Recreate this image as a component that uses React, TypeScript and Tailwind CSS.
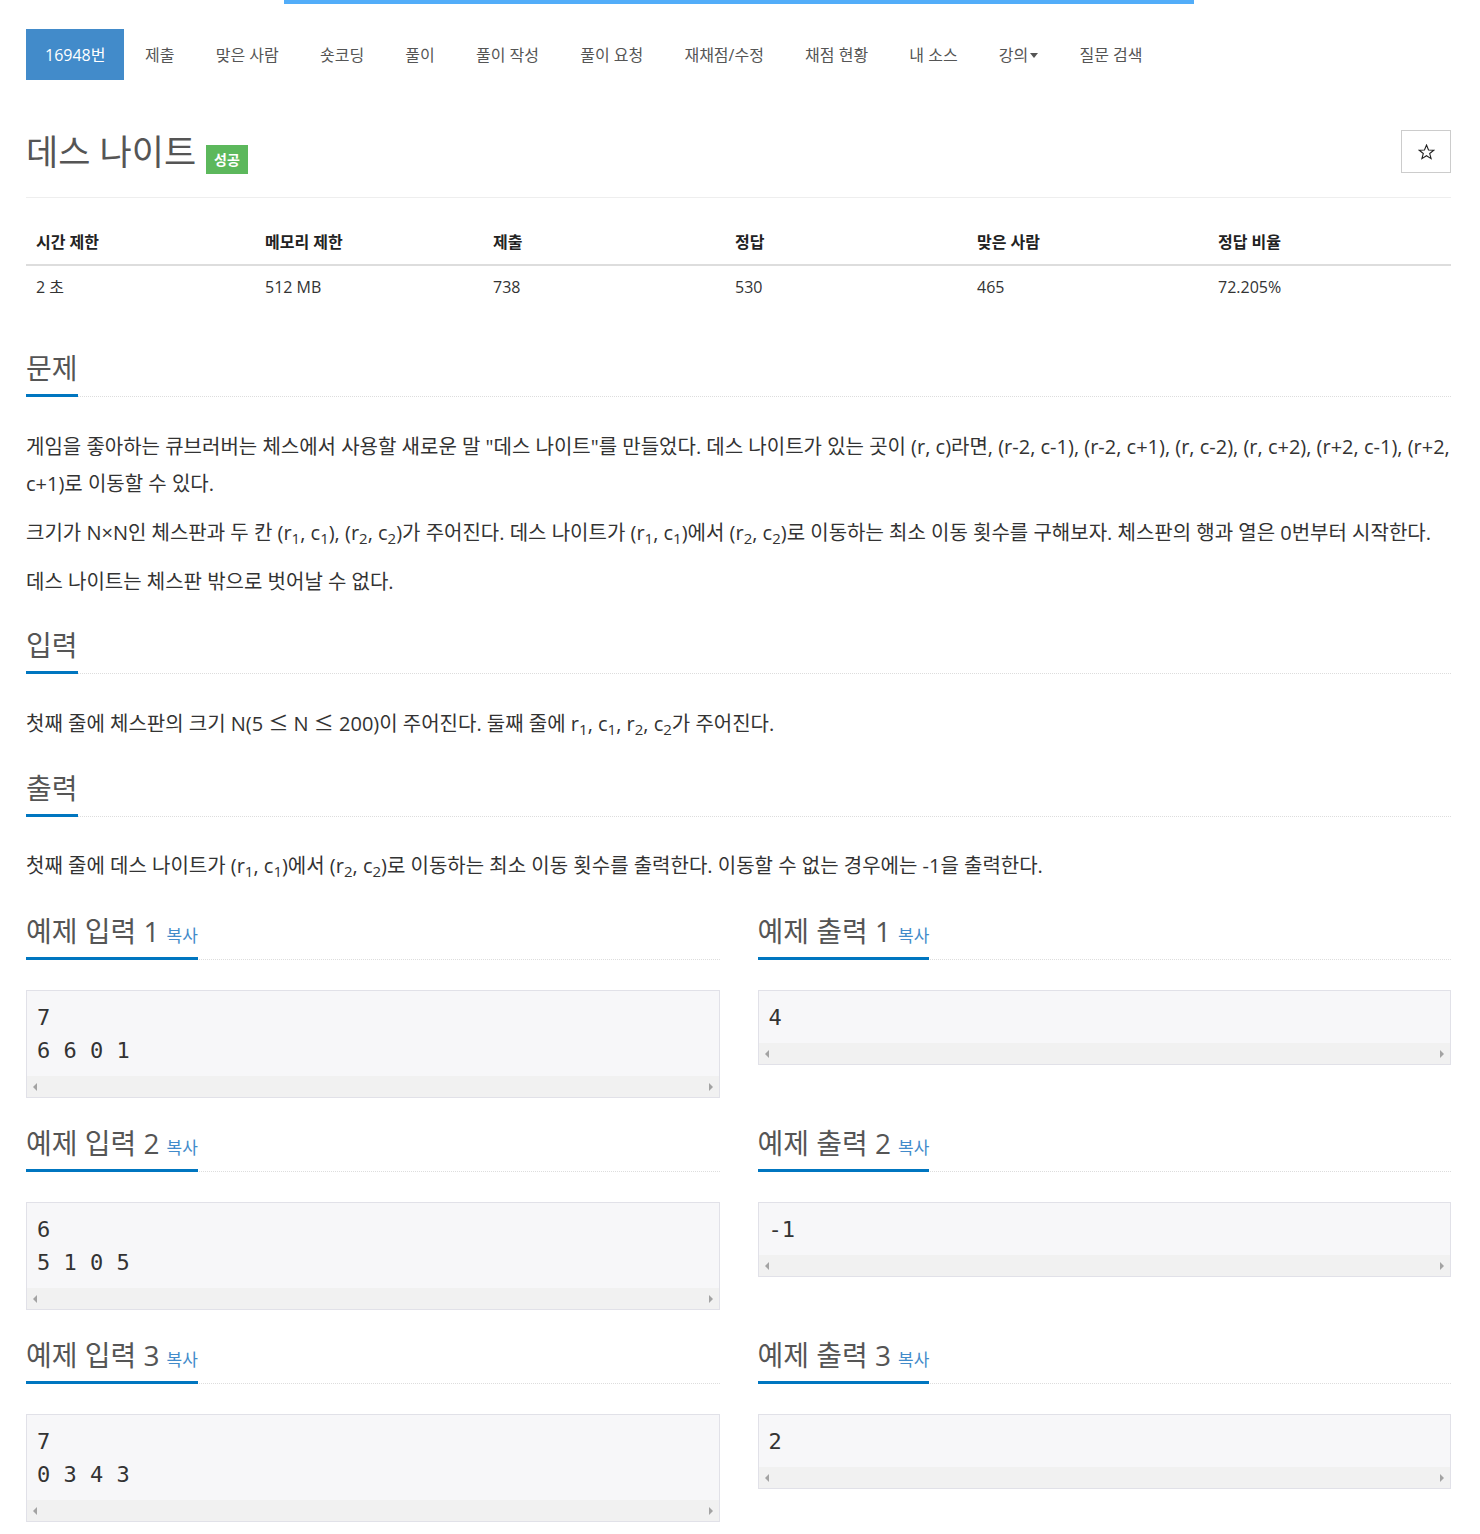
import React from 'react';

const navItems = ['제출', '맞은 사람', '숏코딩', '풀이', '풀이 작성', '풀이 요청', '재채점/수정', '채점 현황', '내 소스'];

const stats = [
  { label: '시간 제한', value: '2 초' },
  { label: '메모리 제한', value: '512 MB' },
  { label: '제출', value: '738' },
  { label: '정답', value: '530' },
  { label: '맞은 사람', value: '465' },
  { label: '정답 비율', value: '72.205%' },
];

const samples = [
  { title: '예제 입력 1', text: '7\n6 6 0 1' },
  { title: '예제 출력 1', text: '4' },
  { title: '예제 입력 2', text: '6\n5 1 0 5' },
  { title: '예제 출력 2', text: '-1' },
  { title: '예제 입력 3', text: '7\n0 3 4 3' },
  { title: '예제 출력 3', text: '2' },
];

const Headline = ({ title, copy }: { title: string; copy?: boolean }) => (
  <div className="border-b border-dotted border-[#ddd]">
    <h2 className="-mb-px inline-block h-[47px] border-b-[3px] border-[#0076c0] text-[28px] leading-[36px] text-[#555]">
      {title}
      {copy && <span className="ml-[7px] text-[17px] leading-none text-[#428bca]">복사</span>}
    </h2>
  </div>
);

const SampleBox = ({ text }: { text: string }) => (
  <div className="border border-[#e1e1e8] bg-[#f7f7f9]">
    <pre className="px-[10px] pt-[10px] pb-[9px] font-['DejaVu_Sans_Mono',monospace] text-[22px] leading-[33px] text-[#333]">
      {text}
    </pre>
    <div className="flex h-[21px] items-center justify-between bg-[#f1f1f1] px-[6px]">
      <div className="h-0 w-0 border-y-[4px] border-r-[4px] border-y-transparent border-r-[#a3a3a3]" />
      <div className="h-0 w-0 border-y-[4px] border-l-[4px] border-y-transparent border-l-[#a3a3a3]" />
    </div>
  </div>
);

const Le = () => <span className="font-['Noto_Sans_CJK_KR',sans-serif]">≤</span>;

const App = () => {
  return (
    <div className="min-h-[1534px] bg-white font-['Open_Sans','Noto_Sans_CJK_KR',sans-serif] text-[#333]">
      <div className="ml-[284px] h-[4px] w-[910px] bg-[#52adf9]" />

      <div className="ml-[26px] w-[1425px]">
        {/* problem menu */}
        <ul className="mt-[25px] flex h-[51px] text-[16px] text-[#555]">
          <li className="flex items-center bg-[#428bca] px-[19px] text-white">16948번</li>
          {navItems.map((item) => (
            <li key={item} className="flex items-center px-[20.6px]">
              {item}
            </li>
          ))}
          <li className="flex items-center px-[20.6px]">
            강의
            <span className="ml-[2px] mt-[2px] h-0 w-0 border-x-[4px] border-t-[5px] border-x-transparent border-t-[#555]" />
          </li>
          <li className="flex items-center px-[20.6px]">질문 검색</li>
        </ul>

        {/* title */}
        <div className="mt-[50px] flex h-[43px] items-center justify-between">
          <div className="flex items-start">
            <h1 className="mt-[2px] text-[35px] leading-[40px] text-[#555]">데스 나이트</h1>
            <span className="ml-[10px] mt-[15px] flex h-[29px] items-center bg-[#5cb85c] px-[8px] text-[14px] font-bold text-white">
              성공
            </span>
          </div>
          <button className="flex h-[43px] w-[50px] items-center justify-center border border-[#ccc] bg-white">
            <svg width="17" height="16" viewBox="0 0 24 23">
              <polygon
                points="12,1.5 14.9,8.6 22.5,8.9 16.6,13.7 18.6,21 12,16.9 5.4,21 7.4,13.7 1.5,8.9 9.1,8.6"
                fill="none"
                stroke="#222"
                strokeWidth="1.6"
              />
            </svg>
          </button>
        </div>

        <div className="mt-[24px] border-t border-[#eee]" />

        {/* stats table */}
        <div className="mt-[22px] text-[16px]">
          <div className="grid h-[46px] grid-cols-[229px_228px_242px_242px_241px_1fr] items-center border-b-2 border-[#ddd] font-bold text-[#222]">
            {stats.map((s) => (
              <div key={s.label} className="px-[10px]">
                {s.label}
              </div>
            ))}
          </div>
          <div className="grid h-[42px] grid-cols-[229px_228px_242px_242px_241px_1fr] items-center">
            {stats.map((s) => (
              <div key={s.label} className="px-[10px]">
                {s.value}
              </div>
            ))}
          </div>
        </div>

        {/* 문제 */}
        <section className="mt-[42px]">
          <Headline title="문제" />
          <div className="mt-[31px] flex flex-col gap-[12px] text-[20px] leading-[37px]">
            <p>
              게임을 좋아하는 큐브러버는 체스에서 사용할 새로운 말 "데스 나이트"를 만들었다. 데스 나이트가 있는 곳이 (r, c)라면, (r-2, c-1), (r-2, c+1), (r, c-2), (r, c+2), (r+2, c-1), (r+2, c+1)로 이동할 수 있다.
            </p>
            <p>
              크기가 N×N인 체스판과 두 칸 (r<sub>1</sub>, c<sub>1</sub>), (r<sub>2</sub>, c<sub>2</sub>)가 주어진다. 데스 나이트가 (r<sub>1</sub>, c<sub>1</sub>)에서 (r<sub>2</sub>, c<sub>2</sub>)로 이동하는 최소 이동 횟수를 구해보자. 체스판의 행과 열은 0번부터 시작한다.
            </p>
            <p>데스 나이트는 체스판 밖으로 벗어날 수 없다.</p>
          </div>
        </section>

        {/* 입력 */}
        <section className="mt-[27px]">
          <Headline title="입력" />
          <div className="mt-[30px] text-[20px] leading-[37px]">
            <p>
              첫째 줄에 체스판의 크기 N(5 <Le /> N <Le /> 200)이 주어진다. 둘째 줄에 r<sub>1</sub>, c<sub>1</sub>, r<sub>2</sub>, c<sub>2</sub>가 주어진다.
            </p>
          </div>
        </section>

        {/* 출력 */}
        <section className="mt-[28px]">
          <Headline title="출력" />
          <div className="mt-[30px] text-[20px] leading-[37px]">
            <p>
              첫째 줄에 데스 나이트가 (r<sub>1</sub>, c<sub>1</sub>)에서 (r<sub>2</sub>, c<sub>2</sub>)로 이동하는 최소 이동 횟수를 출력한다. 이동할 수 없는 경우에는 -1을 출력한다.
            </p>
          </div>
        </section>

        {/* samples */}
        <div className="mt-[29px] grid grid-cols-2 items-start gap-x-[38px] gap-y-[27px] pb-[12px]">
          {samples.map((s) => (
            <section key={s.title}>
              <Headline title={s.title} copy />
              <div className="mt-[30px]">
                <SampleBox text={s.text} />
              </div>
            </section>
          ))}
        </div>
      </div>
    </div>
  );
};

export default App;
